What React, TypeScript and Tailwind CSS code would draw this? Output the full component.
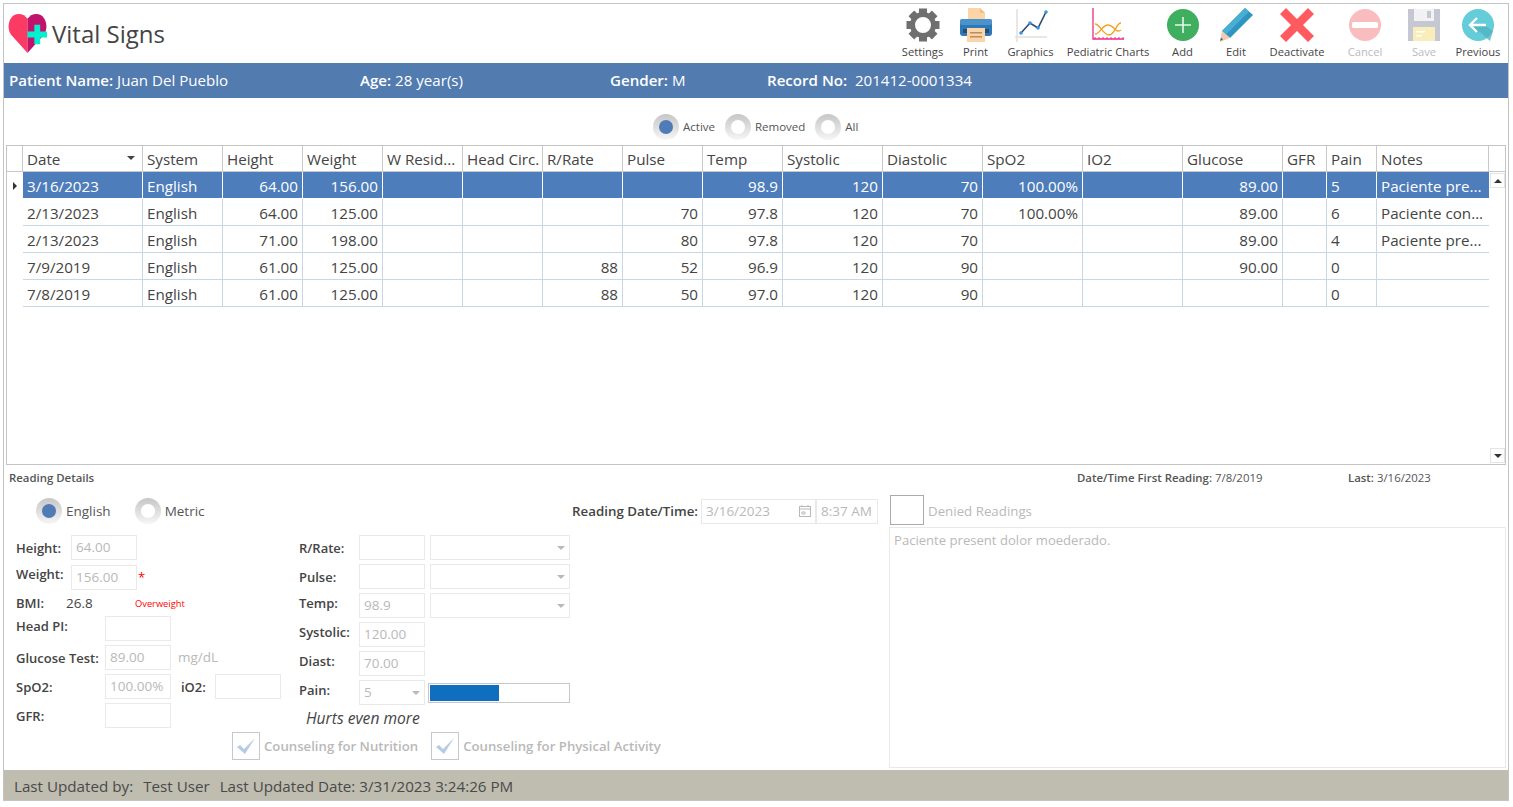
import { ReactNode } from "react";

const font = "font-['Open_Sans','Noto_Sans',sans-serif]";

const SettingsIcon = () => (
  <svg width="36" height="34" viewBox="0 0 36 34">
    <g fill="#6f6f6f">
      {[0, 45, 90, 135, 180, 225, 270, 315].map((a) => (
        <rect key={a} x="14" y="0.500" width="8" height="8" transform={`rotate(${a} 18 17)`} />
      ))}
    </g>
    <circle cx="18" cy="17" r="10.500" fill="none" stroke="#6f6f6f" strokeWidth="5" />
  </svg>
);

const PrintIcon = () => (
  <svg width="34" height="34" viewBox="0 0 34 34">
    <path d="M9 0h12l5 5v10H9z" fill="#fbd5a8" />
    <path d="M21 0l5 5h-5z" fill="#f3bd86" />
    <rect x="1" y="11" width="32" height="17" rx="3" fill="#2f78b5" />
    <rect x="1" y="11" width="32" height="6" rx="2" fill="#4a93cb" />
    <rect x="4" y="21" width="26" height="4" fill="#1d4f7a" />
    <rect x="8" y="20" width="18" height="14" fill="#fbd5a8" />
    <rect x="11" y="24" width="12" height="1.500" fill="#b98d5c" />
    <rect x="11" y="28" width="12" height="1.500" fill="#b98d5c" />
  </svg>
);

const GraphicsIcon = () => (
  <svg width="34" height="34" viewBox="0 0 34 34">
    <path d="M3 1v33M1 29h32" stroke="#e3e0da" strokeWidth="1.500" fill="none" />
    <path d="M7 25l9-10 8 5 8-16" stroke="#2f4a73" strokeWidth="1.600" fill="none" />
    <g fill="#3b97e6">
      <circle cx="7" cy="25" r="1.800" />
      <circle cx="16" cy="15" r="1.800" />
      <circle cx="24" cy="20" r="1.800" />
      <circle cx="32" cy="4" r="1.800" />
    </g>
  </svg>
);

const PediatricIcon = () => (
  <svg width="34" height="34" viewBox="0 0 34 34">
    <path d="M2 0v31h31" stroke="#ee2a8a" strokeWidth="1.300" fill="none" />
    <path d="M4 31V29M8 31V29M12 31V29M16 31V29M20 31V29M24 31V29M28 31V29M32 31V29" stroke="#ee2a8a" strokeWidth="1" />
    <path d="M4 16c5 0 8 11 14 11s7-12 12-12" stroke="#f5a01f" strokeWidth="1.300" fill="none" />
    <path d="M4 26c5 0 7-9 13-9s8 9 13 5" stroke="#f5a01f" strokeWidth="1.300" fill="none" />
  </svg>
);

const AddIcon = () => (
  <svg width="32" height="32" viewBox="0 0 32 32">
    <circle cx="16" cy="16" r="16" fill="#3fae5e" />
    <path d="M16 8v16M8 16h16" stroke="#e8f6ec" strokeWidth="1.600" />
  </svg>
);

const EditIcon = () => (
  <svg width="34" height="34" viewBox="0 0 34 34">
    <path d="M26 0l8 7L11 30 3 23z" fill="#2f94bf" />
    <path d="M26 0l4 3.500L7 26.500 3 23z" fill="#49aed3" />
    <path d="M3 23l8 7-10 4z" fill="#f5c9ad" />
    <path d="M2 29.500l2 2L1 33z" fill="#2a6f90" />
  </svg>
);

const DeactivateIcon = () => (
  <svg width="34" height="34" viewBox="0 0 34 34">
    <path d="M6 0L0 6l11 11L0 28l6 6 11-11 11 11 6-6-11-11L34 6l-6-6-11 11z" fill="#ff5a60" />
  </svg>
);

const CancelIcon = () => (
  <svg width="32" height="32" viewBox="0 0 32 32">
    <circle cx="16" cy="16" r="16" fill="#f9bcbf" />
    <rect x="3" y="13" width="26" height="6" rx="1.500" fill="#fff" />
  </svg>
);

const SaveIcon = () => (
  <svg width="32" height="32" viewBox="0 0 32 32">
    <path d="M0 0h32v32H0z" fill="#c5c7d3" />
    <rect x="6" y="0" width="20" height="12" fill="#f2f2f4" />
    <rect x="19" y="2" width="4" height="7" fill="#c5c7d3" />
    <rect x="5" y="18" width="22" height="14" fill="#f9edb9" />
    <rect x="8" y="22" width="9" height="1.500" fill="#fff" />
    <rect x="8" y="26" width="6" height="1.500" fill="#fff" />
  </svg>
);

const PreviousIcon = () => (
  <svg width="32" height="32" viewBox="0 0 32 32">
    <circle cx="16" cy="16" r="16" fill="#65cdd9" />
    <path d="M16 8l-8 8 8 8 1.500-1.500L28 32l3-10-9-6H9z" fill="#4fb1be" opacity="0.750" />
    <path d="M15 9l-7 7 7 7M8 16h16" stroke="#fff" strokeWidth="2.400" fill="none" />
  </svg>
);

const tools: { label: string; width: string; icon: ReactNode; muted?: boolean }[] = [
  { label: "Settings", width: "w-[53px]", icon: <SettingsIcon /> },
  { label: "Print", width: "w-[53px]", icon: <PrintIcon /> },
  { label: "Graphics", width: "w-[57px]", icon: <GraphicsIcon /> },
  { label: "Pediatric Charts", width: "w-[98px]", icon: <PediatricIcon /> },
  { label: "Add", width: "w-[51px]", icon: <AddIcon /> },
  { label: "Edit", width: "w-[56px]", icon: <EditIcon /> },
  { label: "Deactivate", width: "w-[66px]", icon: <DeactivateIcon /> },
  { label: "Cancel", width: "w-[70px]", icon: <CancelIcon />, muted: true },
  { label: "Save", width: "w-[48px]", icon: <SaveIcon />, muted: true },
  { label: "Previous", width: "w-[60px]", icon: <PreviousIcon /> },
];

const columns = [
  { name: "Date", width: "w-[120px]" },
  { name: "System", width: "w-[80px]" },
  { name: "Height", width: "w-[80px]", right: true },
  { name: "Weight", width: "w-[80px]", right: true },
  { name: "W Resid...", width: "w-[80px]", right: true },
  { name: "Head Circ.", width: "w-[80px]", right: true },
  { name: "R/Rate", width: "w-[80px]", right: true },
  { name: "Pulse", width: "w-[80px]", right: true },
  { name: "Temp", width: "w-[80px]", right: true },
  { name: "Systolic", width: "w-[100px]", right: true },
  { name: "Diastolic", width: "w-[100px]", right: true },
  { name: "SpO2", width: "w-[100px]", right: true },
  { name: "IO2", width: "w-[100px]", right: true },
  { name: "Glucose", width: "w-[100px]", right: true },
  { name: "GFR", width: "w-[44px]", right: true },
  { name: "Pain", width: "w-[50px]" },
  { name: "Notes", width: "w-[112px]" },
];

const rows = [
  ["3/16/2023", "English", "64.00", "156.00", "", "", "", "", "98.9", "120", "70", "100.00%", "", "89.00", "", "5", "Paciente pre..."],
  ["2/13/2023", "English", "64.00", "125.00", "", "", "", "70", "97.8", "120", "70", "100.00%", "", "89.00", "", "6", "Paciente con..."],
  ["2/13/2023", "English", "71.00", "198.00", "", "", "", "80", "97.8", "120", "70", "", "", "89.00", "", "4", "Paciente pre..."],
  ["7/9/2019", "English", "61.00", "125.00", "", "", "88", "52", "96.9", "120", "90", "", "", "90.00", "", "0", ""],
  ["7/8/2019", "English", "61.00", "125.00", "", "", "88", "50", "97.0", "120", "90", "", "", "", "", "0", ""],
];

const Radio = ({ on, size = "text-[11.500px]", label }: { on?: boolean; size?: string; label: string }) => (
  <div className="flex items-center gap-[4px]">
    <div className="flex h-[26px] w-[26px] items-center justify-center rounded-full bg-gradient-to-b from-[#c6c6c6] to-[#f6f6f6]">
      <div className={`h-[14px] w-[14px] rounded-full ${on ? "bg-[#4f7cb6]" : "bg-white"}`} />
    </div>
    <span className={`${size} text-[#555]`}>{label}</span>
  </div>
);

const Field = ({ value, width = "w-[66px]" }: { value?: string; width?: string }) => (
  <div className={`flex h-[25px] ${width} items-center border border-[#e9e9e9] px-[4px] text-[13.500px] text-[#b9b9b9]`}>
    {value}
  </div>
);

const Combo = ({ value, width = "w-[140px]" }: { value?: string; width?: string }) => (
  <div className={`flex h-[25px] ${width} items-center justify-between border border-[#e9e9e9] pl-[4px] pr-[4px] text-[13.500px] text-[#b9b9b9]`}>
    <span>{value}</span>
    <span className="h-0 w-0 border-x-[4px] border-t-[4px] border-x-transparent border-t-[#b9b9b9]" />
  </div>
);

const Label = ({ children, width, shift = "-mt-[3px]" }: { children: ReactNode; width: string; shift?: string }) => (
  <span className={`${width} ${shift} shrink-0 text-[13px] font-semibold text-[#444]`}>{children}</span>
);

const Check = ({ label }: { label: string }) => (
  <div className="flex items-center gap-[4px]">
    <div className="flex h-[28px] w-[28px] items-center justify-center border border-[#c4c8cf] bg-white">
      <svg width="22" height="20" viewBox="0 0 22 20">
        <path d="M2 11l3-2 4 4L20 2 10 18z" fill="#b5cbe6" />
      </svg>
    </div>
    <span className="mt-[2px] text-[13.200px] font-semibold text-[#b9b9b9]">{label}</span>
  </div>
);

export default function App() {
  return (
    <div className={`${font} h-[807px] w-[1513px] overflow-hidden bg-white pl-[3px] pt-[3px]`}>
      <div className="flex h-[798px] w-[1506px] flex-col border border-[#c4c4c4]">
        <div className="flex h-[59px] shrink-0 items-start justify-between">
          <div className="flex items-center pl-[3px] pt-[9px]">
            <svg width="41" height="40" viewBox="0 0 40 41">
              <path d="M20 41L3 22C-2 15 1 1 11 1c4 0 7 2 9 5z" fill="#fb3b63" />
              <path d="M20 41l17-19c5-7 2-21-8-21-4 0-7 2-9 5z" fill="#c2136c" />
              <path d="M20 19h7v-7h6v7h7v6h-7v7h-6v-7h-7z" fill="#04efcf" />
            </svg>
            <span className="ml-[4px] mt-[2px] text-[24px] font-medium leading-none text-[#444]">Vital Signs</span>
          </div>
          <div className="flex pt-[4px]">
            {tools.map((t) => (
              <div key={t.label} className={`flex ${t.width} flex-col items-center`}>
                <div className="flex h-[34px] items-center">{t.icon}</div>
                <span className={`mt-[2px] whitespace-nowrap text-[11.200px] leading-[16px] ${t.muted ? "text-[#bbb]" : "text-[#444]"}`}>
                  {t.label}
                </span>
              </div>
            ))}
          </div>
        </div>

        <div className="flex h-[35px] shrink-0 items-center bg-[#527bb0] pl-[5px] text-[15.100px] text-white">
          <span className="w-[351px]"><b className="font-semibold">Patient Name:</b> Juan Del Pueblo</span>
          <span className="w-[250px]"><b className="font-semibold">Age:</b> 28 year(s)</span>
          <span className="w-[157px]"><b className="font-semibold">Gender:</b> M</span>
          <span><b className="font-semibold">Record No:</b>&nbsp; 201412-0001334</span>
        </div>

        <div className="flex h-[47px] shrink-0 items-center pl-[649px] pt-[10px]">
          <Radio on label="Active" />
          <div className="ml-[10px]"><Radio label="Removed" /></div>
          <div className="ml-[10px]"><Radio label="All" /></div>
        </div>

        <div className="ml-[2px] flex h-[320px] w-[1500px] shrink-0 flex-col border border-[#c4c4c4]">
          <div className="flex h-[26px] shrink-0 border-b border-[#c8c8c8]">
            <div className="w-[16px] shrink-0 border-r border-[#c8c8c8]" />
            {columns.map((c) => (
              <div key={c.name} className={`relative ${c.width} flex shrink-0 items-center whitespace-nowrap border-r border-[#c8c8c8] pl-[4px] pt-[2px] text-[15.200px] text-[#444]`}>
                {c.name}
                {c.name === "Date" && (
                  <span className="absolute right-[7px] top-[10px] h-0 w-0 border-x-[4px] border-t-[4px] border-x-transparent border-t-[#444]" />
                )}
              </div>
            ))}
          </div>
          <div className="flex min-h-0 flex-1">
            <div className="flex-1">
              {rows.map((r, i) => (
                <div key={i} className="flex h-[27px]">
                  <div className="flex w-[16px] shrink-0 items-center justify-center">
                    {i === 0 && <span className="h-0 w-0 border-y-[4px] border-l-[4px] border-y-transparent border-l-[#333]" />}
                  </div>
                  {r.map((v, j) => (
                    <div
                      key={j}
                      className={`flex ${columns[j].width} shrink-0 items-center whitespace-nowrap border-b px-[4px] pt-[2px] text-[15.200px] ${
                        j < r.length - 1 ? "border-r" : ""
                      } ${columns[j].right ? "justify-end" : ""} ${
                        i === 0 ? "border-b-white border-r-white bg-[#4d7dba] text-white" : "border-[#c9d6e4] text-[#444]"
                      }`}
                    >
                      {v}
                    </div>
                  ))}
                </div>
              ))}
            </div>
            <div className="flex w-[17px] shrink-0 flex-col justify-between pb-[1px] pl-[1px] pt-[1px]">
              <div className="flex h-[15px] w-[15px] items-center justify-center border border-[#e4e4e4]">
                <span className="h-0 w-0 border-x-[4px] border-b-[4px] border-x-transparent border-b-[#333]" />
              </div>
              <div className="flex h-[15px] w-[15px] items-center justify-center border border-[#e4e4e4]">
                <span className="h-0 w-0 border-x-[4px] border-t-[4px] border-x-transparent border-t-[#333]" />
              </div>
            </div>
          </div>
        </div>

        <div className="flex h-[25px] shrink-0 items-center text-[11.400px] text-[#555]">
          <span className="w-[1073px] pl-[5px] font-semibold">Reading Details</span>
          <span className="w-[271px]"><b className="font-semibold">Date/Time First Reading:</b> 7/8/2019</span>
          <span><b className="font-semibold">Last:</b> 3/16/2023</span>
        </div>

        <div className="flex min-h-0 flex-1">
          <div className="w-[885px] shrink-0">
            <div className="flex h-[45px] items-center justify-between pb-[3px] pr-[11px]">
              <div className="flex gap-[24px] pl-[32px]">
                <Radio on size="text-[13.500px]" label="English" />
                <Radio size="text-[13.500px]" label="Metric" />
              </div>
              <div className="flex items-center">
                <span className="mr-[3px] mt-[1px] text-[13.300px] font-semibold text-[#444]">Reading Date/Time:</span>
                <div className="flex h-[25px] w-[115px] items-center justify-between border border-[#e9e9e9] px-[4px] text-[13.500px] text-[#b9b9b9]">
                  3/16/2023
                  <svg width="12" height="12" viewBox="0 0 12 12" fill="none" stroke="#b9b9b9">
                    <rect x="0.500" y="1.500" width="11" height="10" />
                    <path d="M0 4h12M3 0v2M9 0v2M3 7h3v2H3z" />
                  </svg>
                </div>
                <Field value="8:37 AM" width="w-[62px]" />
              </div>
            </div>

            <div className="flex pl-[12px]">
              <div className="w-[283px] shrink-0 space-y-[4px]">
                <div className="flex items-center">
                  <Label width="w-[55px]" shift="mt-[3px]">Height:</Label>
                  <Field value="64.00" />
                </div>
                <div className="flex h-[26px] items-center">
                  <Label width="w-[55px]" shift="-mt-[5px]">Weight:</Label>
                  <div className="mt-[1px]"><Field value="156.00" /></div>
                  <span className="ml-[1px] text-[13px] leading-none text-[#f00]">*</span>
                </div>
                <div className="-my-[1px] flex h-[24px] items-center">
                  <Label width="w-[50px]">BMI:</Label>
                  <span className="-mt-[3px] w-[69px] text-[13.500px] text-[#444]">26.8</span>
                  <span className="-mt-[3px] text-[9.300px] text-[#f00]">Overweight</span>
                </div>
                <div className="flex items-center">
                  <Label width="w-[89px]">Head PI:</Label>
                  <Field />
                </div>
                <div className="flex items-center">
                  <Label width="w-[89px]" shift="mt-[3px]">Glucose Test:</Label>
                  <Field value="89.00" />
                  <span className="ml-[7px] text-[13.500px] text-[#b9b9b9]">mg/dL</span>
                </div>
                <div className="flex items-center">
                  <Label width="w-[89px]" shift="mt-[3px]">SpO2:</Label>
                  <Field value="100.00%" />
                  <span className="ml-[10px] mt-[2px] w-[34px] text-[13px] font-semibold text-[#444]">iO2:</span>
                  <Field />
                </div>
                <div className="flex items-center">
                  <Label width="w-[89px]" shift="mt-[3px]">GFR:</Label>
                  <Field />
                </div>
              </div>

              <div className="w-[272px] shrink-0 space-y-[4px]">
                <div className="flex items-center">
                  <Label width="w-[60px]" shift="mt-[3px]">R/Rate:</Label>
                  <Field />
                  <div className="ml-[5px]"><Combo /></div>
                </div>
                <div className="flex items-center">
                  <Label width="w-[60px]" shift="mt-[3px]">Pulse:</Label>
                  <Field />
                  <div className="ml-[5px]"><Combo /></div>
                </div>
                <div className="flex items-center">
                  <Label width="w-[60px]">Temp:</Label>
                  <Field value="98.9" />
                  <div className="ml-[5px]"><Combo /></div>
                </div>
                <div className="flex items-center">
                  <Label width="w-[60px]">Systolic:</Label>
                  <Field value="120.00" />
                </div>
                <div className="flex items-center">
                  <Label width="w-[60px]">Diast:</Label>
                  <Field value="70.00" />
                </div>
                <div className="flex items-center">
                  <Label width="w-[60px]">Pain:</Label>
                  <Combo value="5" width="w-[66px]" />
                  <div className="ml-[3px] h-[20px] w-[142px] border border-[#c8c8c8] p-[1px]">
                    <div className="h-full w-[69px] bg-[#106ebe]" />
                  </div>
                </div>
                <div className="-mt-[1px] pl-[7px] text-[15.600px] italic leading-[21px] text-[#444]">Hurts even more</div>
              </div>
            </div>

            <div className="mt-[3px] flex gap-[13px] pl-[228px]">
              <Check label="Counseling for Nutrition" />
              <Check label="Counseling for Physical Activity" />
            </div>
          </div>

          <div className="flex-1 pb-[2px]">
            <div className="flex h-[37px] items-start gap-[4px] pl-[1px] pt-[5px]">
              <div className="h-[30px] w-[34px] border border-[#aaa]" />
              <span className="mt-[7px] text-[13.300px] text-[#b9b9b9]">Denied Readings</span>
            </div>
            <div className="h-[241px] w-[617px] border border-[#e9e9e9] px-[4px] py-[3px] text-[13.100px] text-[#b9b9b9]">
              Paciente present dolor moederado.
            </div>
          </div>
        </div>

        <div className="flex h-[30px] shrink-0 items-center gap-[10px] whitespace-nowrap bg-[#bfbcb0] pl-[10px] pt-[3px] text-[15.200px] text-[#4a4a4a]">
          <span>Last Updated by:</span>
          <span>Test User</span>
          <span>Last Updated Date: 3/31/2023 3:24:26 PM</span>
        </div>
      </div>
    </div>
  );
}
